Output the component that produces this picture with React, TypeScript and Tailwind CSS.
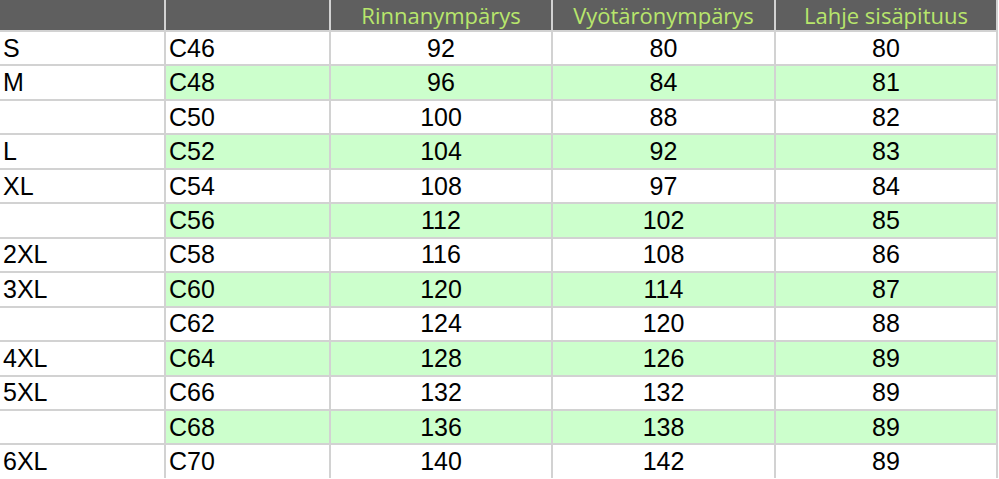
const headers = ["", "", "Rinnanympärys", "Vyötärönympärys", "Lahje sisäpituus"];

const rows: [string, string, string, string, string][] = [
  ["S", "C46", "92", "80", "80"],
  ["M", "C48", "96", "84", "81"],
  ["", "C50", "100", "88", "82"],
  ["L", "C52", "104", "92", "83"],
  ["XL", "C54", "108", "97", "84"],
  ["", "C56", "112", "102", "85"],
  ["2XL", "C58", "116", "108", "86"],
  ["3XL", "C60", "120", "114", "87"],
  ["", "C62", "124", "120", "88"],
  ["4XL", "C64", "128", "126", "89"],
  ["5XL", "C66", "132", "132", "89"],
  ["", "C68", "136", "138", "89"],
  ["6XL", "C70", "140", "142", "89"],
];

export default function App() {
  return (
    <div className="w-[999px] h-[479px] bg-white overflow-hidden">
      <div className="w-[998px] grid grid-cols-[164px_163px_220px_221px_220px] gap-[2px] bg-[#d2d2d2] pr-[2px]">
        {/* Header */}
        {headers.map((h, i) => (
          <div
            key={"h" + i}
            className="h-[30px] bg-[#5f5f5f] flex items-center justify-center text-[#b8e66c] text-[22px] font-['Open_Sans',sans-serif] leading-none"
          >
            {h}
          </div>
        ))}
        {/* Body */}
        {rows.map((r, ri) =>
          r.map((cell, ci) => {
            const green = ri % 2 === 1 && ci > 0;
            return (
              <div
                key={ri + "-" + ci}
                className={
                  "h-[32.46px] flex items-center text-[25px] leading-none text-black font-['Liberation_Sans',Arial,sans-serif] " +
                  (green ? "bg-[#ccffcc] " : "bg-white ") +
                  (ci < 2 ? "pl-[3px]" : "justify-center")
                }
              >
                {cell}
              </div>
            );
          })
        )}
      </div>
    </div>
  );
}
